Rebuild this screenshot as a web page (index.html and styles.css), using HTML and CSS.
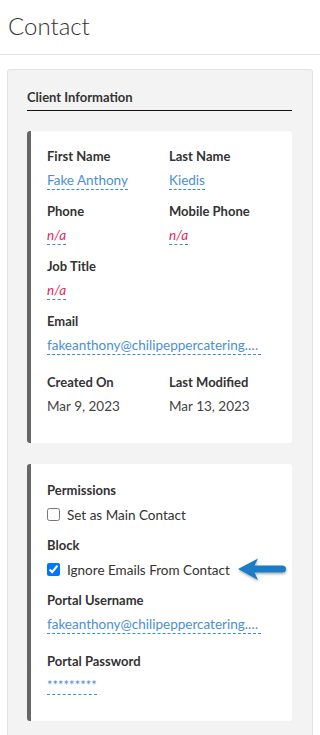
FILE: index.html
```html
<!DOCTYPE html>
<html>
<head>
<meta charset="utf-8">
<link rel="stylesheet" href="styles.css">
</head>
<body>
<header class="page-header">
  <h1 class="page-title">Contact</h1>
</header>
<main class="page-main">
  <section class="panel">
    <h2 class="panel-heading">Client Information</h2>
    <div class="card">
      <div class="grid">
        <div class="field">
          <div class="label">First Name</div>
          <span class="value link">Fake Anthony</span>
        </div>
        <div class="field">
          <div class="label">Last Name</div>
          <span class="value link">Kiedis</span>
        </div>
        <div class="field">
          <div class="label">Phone</div>
          <span class="value empty">n/a</span>
        </div>
        <div class="field">
          <div class="label">Mobile Phone</div>
          <span class="value empty">n/a</span>
        </div>
        <div class="field full">
          <div class="label">Job Title</div>
          <span class="value empty">n/a</span>
        </div>
        <div class="field full wide">
          <div class="label">Email</div>
          <span class="value link trunc">fakeanthony@chilipeppercatering.com</span>
        </div>
        <div class="field last">
          <div class="label">Created On</div>
          <span class="value plain">Mar 9, 2023</span>
        </div>
        <div class="field last">
          <div class="label">Last Modified</div>
          <span class="value plain">Mar 13, 2023</span>
        </div>
      </div>
    </div>
    <div class="card">
      <div class="field">
        <div class="label">Permissions</div>
        <label class="check"><input type="checkbox"><span>Set as Main Contact</span></label>
      </div>
      <div class="field">
        <div class="label">Block</div>
        <label class="check arrow-row"><input type="checkbox" checked><span>Ignore Emails From Contact</span>
          <svg class="arrow" width="52" height="28" viewBox="0 0 52 28">
            <defs>
              <filter id="sh" x="-20%" y="-30%" width="140%" height="170%">
                <feDropShadow dx="0.5" dy="1.5" stdDeviation="1" flood-color="#000" flood-opacity="0.35"/>
              </filter>
            </defs>
            <path filter="url(#sh)" fill="#1a7cc6" d="M1 12 L21 1.5 L17.5 8.5 L45 8.5 Q49 8.5 49 12 Q49 15.5 45 15.5 L17.5 15.5 L21 23 Z"/>
          </svg>
        </label>
      </div>
      <div class="field wide">
        <div class="label">Portal Username</div>
        <span class="value link trunc">fakeanthony@chilipeppercatering.com</span>
      </div>
      <div class="field last">
        <div class="label">Portal Password</div>
        <span class="value link pw">*********</span>
      </div>
    </div>
  </section>
</main>
</body>
</html>
```
FILE: styles.css
```css
* { box-sizing: border-box; }
html, body { margin: 0; padding: 0; background: #fff; }
body {
  font-family: "Source Sans Pro", Lato, "Noto Sans", sans-serif;
  color: #333;
  width: 320px;
  height: 735px;
  overflow: hidden;
}
.page-header {
  height: 55px;
  border-bottom: 1px solid #e6e6e6;
  padding: 0 8px;
  display: flex;
  align-items: center;
}
.page-title {
  margin: 0;
  font-size: 24px;
  font-weight: 300;
  color: #333;
  line-height: 1;
  padding-bottom: 2px;
}
.page-main {
  padding: 14px 7px 0 7px;
}
.panel {
  background: #f3f3f3;
  border: 1px solid #e2e2e2;
  border-radius: 3px;
  padding: 18px 20px 40px 19px;
  min-height: 700px;
}
.panel-heading {
  margin: 0;
  font-size: 13px;
  font-weight: 700;
  line-height: 18px;
  padding-bottom: 4px;
  border-bottom: 1.5px solid #111;
  color: #333;
}
.card {
  position: relative;
  background: #fff;
  border-left: 4px solid #666;
  border-radius: 3px;
  margin-top: 20px;
  padding: 16px 16px 27px 16px;
}
.card + .card { margin-top: 21px; padding-top: 17px; padding-bottom: 26px; }
.grid {
  display: grid;
  grid-template-columns: 122px 1fr;
}
.full { grid-column: 1 / -1; }
.field { margin-bottom: 12px; }
.field.wide { margin-bottom: 18px; }
.field.last { margin-bottom: 0; }
.label {
  font-size: 13px;
  font-weight: 700;
  line-height: 18px;
  margin-bottom: 6px;
  color: #333;
}
.value {
  display: inline-block;
  font-size: 13.5px;
  line-height: 18px;
  border-bottom: 1px dashed #3f8bd6;
  vertical-align: top;
}
.link { color: #4b8fd5; }
.empty { color: #e1295c; font-style: italic; }
.plain { color: #444; border-bottom-color: transparent; }
.trunc {
  max-width: 214px;
  white-space: nowrap;
  overflow: hidden;
  text-overflow: ellipsis;
}
.pw {
  font-size: 13px;
  line-height: 18px;
}
.check {
  display: flex;
  align-items: center;
  height: 19px;
  font-size: 13.5px;
  color: #333;
  position: relative;
}
.check input {
  width: 13px;
  height: 13px;
  margin: 0 7px 0 0;
}
.arrow {
  position: absolute;
  left: 190px;
  top: -3px;
}
```
